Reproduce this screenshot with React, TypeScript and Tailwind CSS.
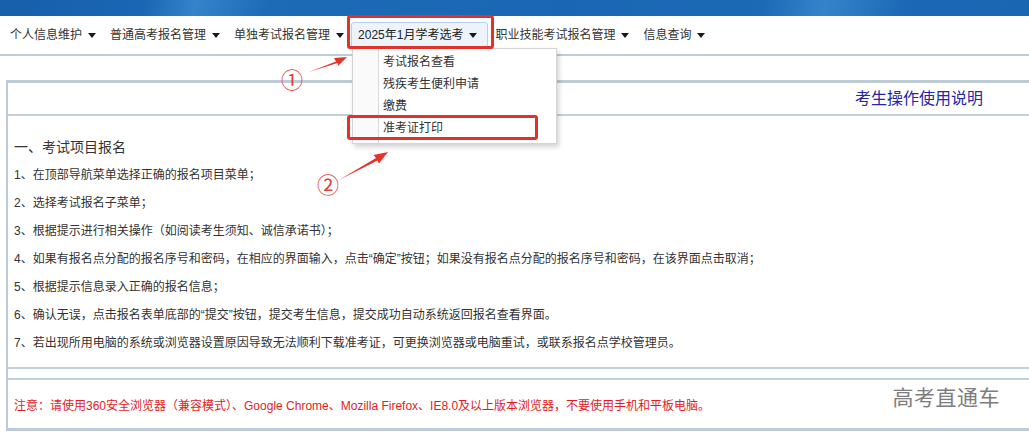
// 报名系统首页 — top nav with the open "学考选考" dropdown, plus the
// operating-instructions box and the two red annotation callouts.

const NAV = [
  "个人信息维护",
  "普通高考报名管理",
  "单独考试报名管理",
  "2025年1月学考选考",
  "职业技能考试报名管理",
  "信息查询",
];

const MENU = ["考试报名查看", "残疾考生便利申请", "缴费", "准考证打印"];

const STEPS = [
  "1、在顶部导航菜单选择正确的报名项目菜单；",
  "2、选择考试报名子菜单；",
  "3、根据提示进行相关操作（如阅读考生须知、诚信承诺书）；",
  "4、如果有报名点分配的报名序号和密码，在相应的界面输入，点击“确定”按钮；如果没有报名点分配的报名序号和密码，在该界面点击取消；",
  "5、根据提示信息录入正确的报名信息；",
  "6、确认无误，点击报名表单底部的“提交”按钮，提交考生信息，提交成功自动系统返回报名查看界面。",
  "7、若出现所用电脑的系统或浏览器设置原因导致无法顺利下载准考证，可更换浏览器或电脑重试，或联系报名点学校管理员。",
];

function Caret() {
  return (
    <svg width="8" height="5" viewBox="0 0 8 5" className="shrink-0" aria-hidden>
      <path d="M0 0H8L4 5Z" fill="#1a1a1a" />
    </svg>
  );
}

function Dropdown() {
  return (
    <div className="absolute left-0 top-[calc(100%+1px)] z-10 flex w-[205px] border border-[#d4d4d4] bg-white shadow-[2px_3px_5px_rgba(0,0,0,0.18)]">
      <div className="w-[26px] shrink-0 border-r border-[#dadada] bg-[#fafafa]" />
      <ul className="flex-1 pt-[2px] pb-[4px]">
        {MENU.map((m) => (
          <li key={m} className="flex h-[22px] items-center pl-[4px] text-[12px] text-[#333]">
            {m}
          </li>
        ))}
      </ul>
    </div>
  );
}

export default function App() {
  return (
    <div className="relative h-[438px] w-[1029px] overflow-hidden bg-white font-['Liberation_Sans','Noto_Sans_CJK_SC',sans-serif] text-[#333]">
      {/* blue banner strip */}
      <div className="h-[16px] bg-[linear-gradient(100deg,#185fab_0%,#1a66b4_14%,#3583cb_19%,#1d6ab7_26%,#1a66b4_55%,#1c69b6_74%,#3584cb_80%,#1b67b5_88%,#1b66b3_100%)]" />

      {/* top navigation */}
      <nav className="flex h-[40px] items-center border-b-2 border-[#bfcdd7] pl-[3px]">
        {NAV.map((n, i) => {
          const active = i === 3;
          return (
            <div
              key={n}
              className={
                active
                  ? "relative flex h-[26px] items-center gap-[6px] rounded-[3px] border border-[#b9d0e8] bg-[#ecf3fb] pl-[6px] pr-[10px] text-[12px] text-[#222]"
                  : "flex h-[26px] items-center gap-[6px] border border-transparent px-[6px] text-[12px] text-[#333]"
              }
            >
              <span>{n}</span>
              <Caret />
              {active && <Dropdown />}
            </div>
          );
        })}
      </nav>

      {/* instructions box */}
      <div className="pl-[6px] pt-[24px]">
        <div className="border-y-[3px] border-l-2 border-[#bccbd5]">
          <div className="flex h-[33px] items-center justify-end border-b-2 border-[#c3d0d9] pr-[46px] text-[16px] text-[#2525a6]">
            考生操作使用说明
          </div>
          <div className="border-b-2 border-[#c3d0d9] px-[6px] pb-[10px] pt-[17px]">
            <h2 className="text-[14px] leading-[28px] text-[#333]">一、考试项目报名</h2>
            {STEPS.map((s) => (
              <p key={s} className="text-[12px] leading-[28px] text-[#333]">
                {s}
              </p>
            ))}
          </div>
          <div className="h-[11px] border-b-2 border-[#c3d0d9]" />
          <div className="flex h-[48px] items-center justify-between pl-[6px] pr-[29px]">
            <span className="pt-[4px] text-[12px] text-[#e21b1f]">
              注意：请使用360安全浏览器（兼容模式）、Google Chrome、Mozilla Firefox、IE8.0及以上版本浏览器，不要使用手机和平板电脑。
            </span>
            <span className="mb-[12px] text-[21px] tracking-[0.5px] text-[#7d7d7d]">高考直通车</span>
          </div>
        </div>
      </div>

      {/* red annotation boxes */}
      <div className="absolute left-[347px] top-[15px] z-20 h-[34px] w-[147px] rounded-[3px] border-[3px] border-[#e2302a]" />
      <div className="absolute left-[347px] top-[115px] z-20 h-[25px] w-[191px] rounded-[3px] border-[3px] border-[#e2302a]" />

      {/* callout arrows */}
      <svg className="pointer-events-none absolute inset-0 z-20" width="1029" height="438" aria-hidden>
        <path d="M309 72 L336 61.5 L334 58 L347 57 L338 66 L337.5 63 Z" fill="#e4332b" />
        <path d="M339 180 L376 158 L373.5 155 L388 152 L379 163.5 L377.5 160.5 Z" fill="#e4332b" />
      </svg>
      <span className="absolute left-[281px] top-[68px] text-[22px] leading-[26px] text-[#e0413a]">①</span>
      <span className="absolute left-[317px] top-[173px] text-[22px] leading-[26px] text-[#e0413a]">②</span>
    </div>
  );
}
